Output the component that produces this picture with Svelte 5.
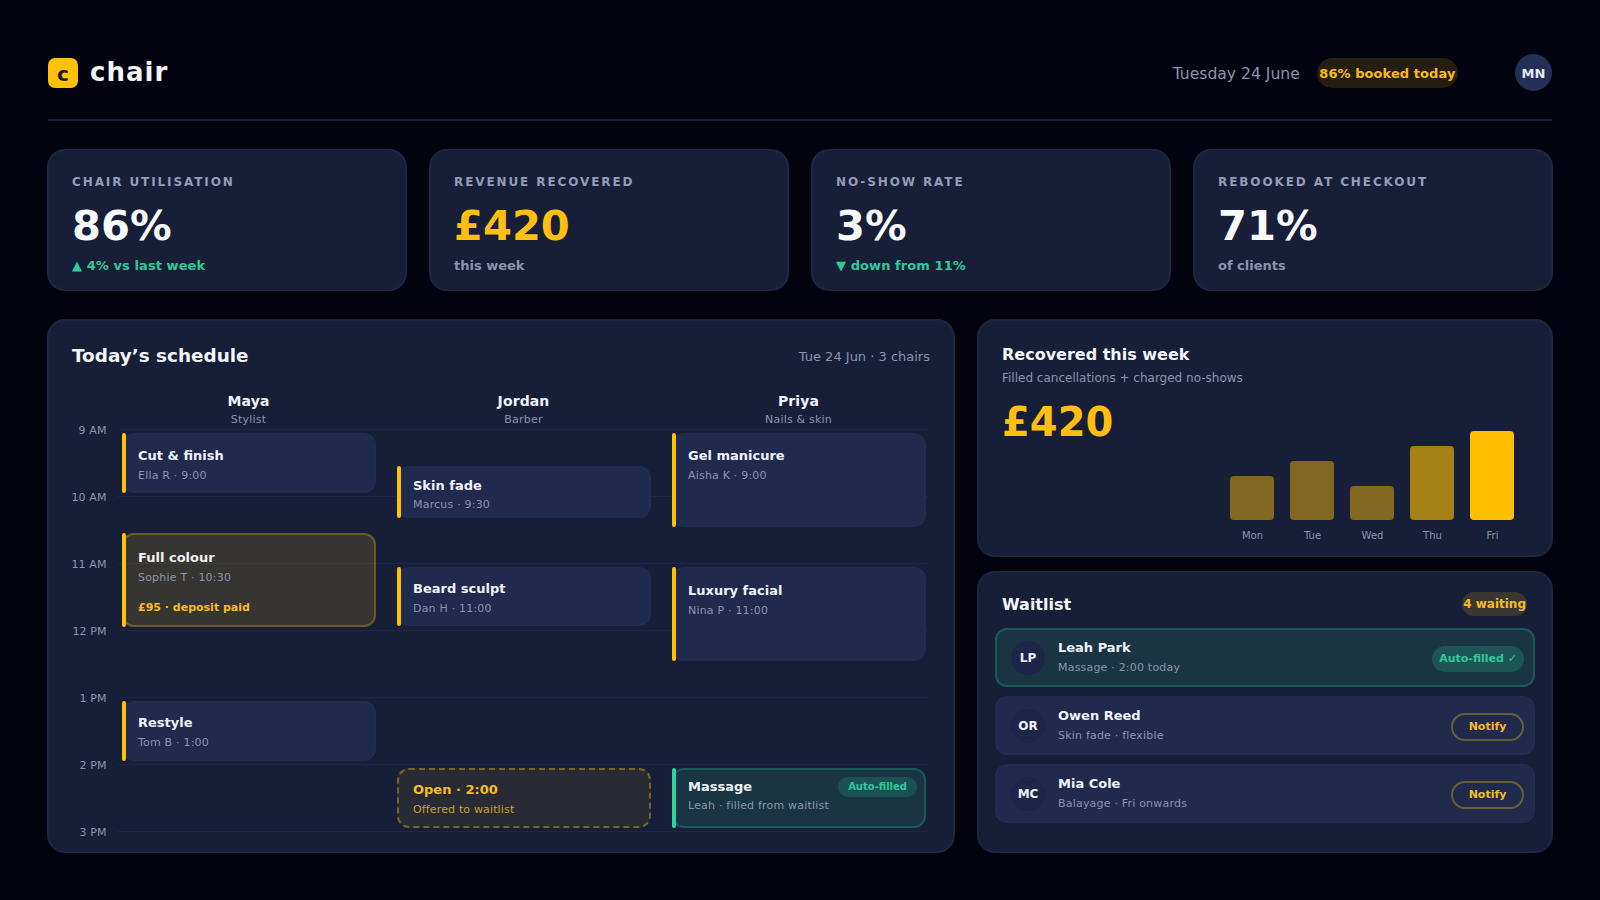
<script>
  const kpis = [
    { label: 'Chair utilisation', value: '86%', sub: '▲ 4% vs last week', subClass: 'up' },
    { label: 'Revenue recovered', value: '£420', sub: 'this week', valueClass: 'gold' },
    { label: 'No-show rate', value: '3%', sub: '▼ down from 11%', subClass: 'up' },
    { label: 'Rebooked at checkout', value: '71%', sub: 'of clients' }
  ];
  const chairs = [
    { name: 'Maya', role: 'Stylist' },
    { name: 'Jordan', role: 'Barber' },
    { name: 'Priya', role: 'Nails & skin' }
  ];
  const hours = ['9 AM', '10 AM', '11 AM', '12 PM', '1 PM', '2 PM', '3 PM'];
  const HOUR = 66.9;
  const COL = 275;
  const events = [
    { col: 0, start: 0, len: 60, pad: 13, title: 'Cut & finish', sub: 'Ella R · 9:00' },
    { col: 0, start: 1.5, len: 94, pad: 15, title: 'Full colour', sub: 'Sophie T · 10:30', note: '£95 · deposit paid', kind: 'deposit' },
    { col: 0, start: 4, len: 60, pad: 12, title: 'Restyle', sub: 'Tom B · 1:00' },
    { col: 1, start: 0.5, len: 52, pad: 10, tight: true, title: 'Skin fade', sub: 'Marcus · 9:30' },
    { col: 1, start: 2, len: 59, pad: 12, title: 'Beard sculpt', sub: 'Dan H · 11:00' },
    { col: 1, start: 5, len: 60, pad: 12, title: 'Open · 2:00', sub: 'Offered to waitlist', kind: 'open' },
    { col: 2, start: 0, len: 94, pad: 13, title: 'Gel manicure', sub: 'Aisha K · 9:00' },
    { col: 2, start: 2, len: 94, pad: 14, title: 'Luxury facial', sub: 'Nina P · 11:00' },
    { col: 2, start: 5, len: 60, pad: 9, tight: true, title: 'Massage', sub: 'Leah · filled from waitlist', kind: 'filled', tag: 'Auto-filled' }
  ];
  const bars = [
    { day: 'Mon', h: 44, o: 0.46 },
    { day: 'Tue', h: 59, o: 0.46 },
    { day: 'Wed', h: 34, o: 0.46 },
    { day: 'Thu', h: 74, o: 0.62 },
    { day: 'Fri', h: 89, o: 1 }
  ];
  const waitlist = [
    { in: 'LP', name: 'Leah Park', sub: 'Massage · 2:00 today', filled: true },
    { in: 'OR', name: 'Owen Reed', sub: 'Skin fade · flexible' },
    { in: 'MC', name: 'Mia Cole', sub: 'Balayage · Fri onwards' }
  ];
</script>

<div class="page">
  <header class="top">
    <div class="brand">
      <span class="logo">c</span>
      <span class="word">chair</span>
    </div>
    <div class="meta">
      <span class="date">Tuesday 24 June</span>
      <span class="booked">86% booked today</span>
      <span class="me">MN</span>
    </div>
  </header>

  <section class="kpis">
    {#each kpis as k}
      <div class="kpi">
        <div class="k-label">{k.label}</div>
        <div class="k-value {k.valueClass ?? ''}">{k.value}</div>
        <div class="k-sub {k.subClass ?? ''}">{k.sub}</div>
      </div>
    {/each}
  </section>

  <section class="main">
    <div class="panel schedule">
      <div class="s-head">
        <h2>Today’s schedule</h2>
        <span class="s-date">Tue 24 Jun · 3 chairs</span>
      </div>
      <div class="chairs">
        {#each chairs as c}
          <div class="chair">
            <div class="c-name">{c.name}</div>
            <div class="c-role">{c.role}</div>
          </div>
        {/each}
      </div>
      <div class="canvas">
        {#each hours as h}
          <div class="hour"><span class="h-label">{h}</span></div>
        {/each}
        {#each events as e}
          <div
            class="event {e.kind ?? ''}"
            class:tight={e.tight}
            style="left:{e.col * COL + 4}px;top:{e.start * HOUR + 4}px;height:{e.len}px;padding-top:{e.pad}px"
          >
            <i class="bar"></i>
            <div class="e-title">{e.title}</div>
            <div class="e-sub">{e.sub}</div>
            {#if e.note}<div class="e-note">{e.note}</div>{/if}
            {#if e.tag}<span class="e-tag">{e.tag}</span>{/if}
          </div>
        {/each}
      </div>
    </div>

    <div class="side">
      <div class="panel recovered">
        <h3>Recovered this week</h3>
        <p class="r-sub">Filled cancellations + charged no-shows</p>
        <div class="r-body">
          <div class="r-value">£420</div>
          <div class="chart">
            {#each bars as b}
              <div class="col">
                <div class="b" style="height:{b.h}px;opacity:{b.o}"></div>
                <span class="d">{b.day}</span>
              </div>
            {/each}
          </div>
        </div>
      </div>

      <div class="panel wait">
        <div class="w-head">
          <h3>Waitlist</h3>
          <span class="w-count">4 waiting</span>
        </div>
        <div class="rows">
          {#each waitlist as w}
            <div class="row" class:filled={w.filled}>
              <span class="init">{w.in}</span>
              <div class="who">
                <div class="w-name">{w.name}</div>
                <div class="w-sub">{w.sub}</div>
              </div>
              {#if w.filled}
                <span class="auto">Auto-filled ✓</span>
              {:else}
                <button class="notify">Notify</button>
              {/if}
            </div>
          {/each}
        </div>
      </div>
    </div>
  </section>
</div>

<style>
  :global(body) {
    margin: 0;
    background: #02030f;
    color: #f4f6fb;
    font-family: "DejaVu Sans", sans-serif;
  }
  h2, h3, p { margin: 0; }
  .page {
    width: 1600px;
    height: 900px;
    box-sizing: border-box;
    padding: 54px 48px 47px;
    display: flex;
    flex-direction: column;
  }
  .top {
    height: 65px;
    flex: none;
    display: flex;
    justify-content: space-between;
    align-items: flex-start;
    border-bottom: 2px solid #161b3a;
  }
  .brand { display: flex; align-items: flex-start; gap: 12px; padding-top: 4px; }
  .logo {
    width: 30px;
    height: 30px;
    box-sizing: border-box;
    padding-top: 2px;
    border-radius: 7px;
    background: #ffc107;
    color: #171717;
    font-weight: 700;
    font-size: 20px;
    line-height: 28px;
    display: flex;
    align-items: center;
    justify-content: center;
  }
  .word { font-size: 26px; font-weight: 700; letter-spacing: 1.05px; line-height: 30px; margin-top: -1px; color: #f4f6fb; }
  .meta { display: flex; align-items: center; }
  .date { font-size: 15.6px; line-height: 20px; padding-top: 2px; color: #8b93ad; margin-right: 17.5px; }
  .booked {
    height: 30px;
    line-height: 32px;
    padding: 0 2px;
    border-radius: 15px;
    background: rgba(255, 193, 7, 0.14);
    color: #f7bd1f;
    font-size: 13px;
    font-weight: 700;
    letter-spacing: 0.07px;
    margin-right: 57.5px;
  }
  .me {
    width: 37px;
    height: 37px;
    box-sizing: border-box;
    padding-top: 1px;
    border-radius: 50%;
    background: #242f55;
    color: #e6e9f4;
    font-size: 13px;
    font-weight: 700;
    display: flex;
    align-items: center;
    justify-content: center;
  }

  .kpis {
    flex: none;
    margin: 28px -1px 0;
    display: grid;
    grid-template-columns: repeat(4, 1fr);
    gap: 22px;
  }
  .kpi {
    height: 142px;
    box-sizing: border-box;
    padding: 24px 23px 0;
    background: #171f38;
    border: 2px solid #1d2541;
    border-radius: 18px;
  }
  .k-label { font-size: 12px; font-weight: 700; letter-spacing: 1.9px; text-transform: uppercase; color: #949cb7; line-height: 14px; }
  .k-value { margin-top: 14px; font-size: 41.6px; font-weight: 700; line-height: 46px; color: #f9fafc; }
  .k-value.gold { color: #ffbf0f; }
  .k-sub { margin-top: 9px; font-size: 13px; font-weight: 700; line-height: 15px; color: #8b93ad; }
  .k-sub.up { color: #2fc99a; letter-spacing: 0.08px; }

  .main {
    margin: 28px -1px 0;
    flex: 1;
    min-height: 0;
    display: grid;
    grid-template-columns: 908px 576px;
    grid-template-rows: minmax(0, 1fr);
    gap: 22px;
  }
  .panel {
    background: #171f38;
    border: 2px solid #1d2541;
    border-radius: 18px;
    box-sizing: border-box;
  }
  .schedule { padding: 0 23px; }
  .s-head { display: flex; justify-content: space-between; align-items: center; height: 22px; margin-top: 23px; }
  h2 { font-size: 18.4px; font-weight: 700; color: #f4f6fb; }
  .s-date { font-size: 13px; color: #8b93ad; padding-top: 3px; }
  .chairs { display: grid; grid-template-columns: repeat(3, 254px); column-gap: 21px; margin: 26px 0 0 49.5px; height: 37px; }
  .chair { text-align: center; }
  .c-name { font-size: 14px; font-weight: 700; letter-spacing: 0.1px; line-height: 18px; color: #f0f2f8; }
  .c-role { font-size: 11px; letter-spacing: 0.2px; line-height: 16px; margin-top: 2px; color: #8b93ad; }

  .canvas { position: relative; margin-left: 46px; width: 810px; }
  .hour { position: relative; height: 67px; box-sizing: border-box; border-top: 1px solid #1e2743; }
  .hour:last-of-type { height: 0; }
  .h-label {
    position: absolute;
    right: 100%;
    margin-right: 11.5px;
    top: -6px;
    font-size: 11px;
    letter-spacing: 0.1px;
    line-height: 14px;
    color: #8b93ad;
    white-space: nowrap;
  }
  .event {
    position: absolute;
    width: 254px;
    box-sizing: border-box;
    padding: 12px 12px 0 14px;
    background: #1f2a4d;
    border: 2px solid #212c4f;
    border-radius: 12px;
  }
  .bar {
    position: absolute;
    left: -2px;
    top: -2px;
    bottom: -2px;
    width: 4px;
    border-radius: 2px;
    background: #ffc107;
  }
  .e-title { font-size: 13px; font-weight: 700; line-height: 16px; color: #f1f3f9; }
  .e-sub { font-size: 11px; letter-spacing: 0.2px; line-height: 14px; margin-top: 5px; color: #8b93ad; }
  .tight .e-sub { margin-top: 4px; }
  .e-note { font-size: 11px; font-weight: 700; line-height: 14px; margin-top: 16px; color: #f7bd1f; }
  .event.deposit {
    background: rgba(255, 193, 7, 0.14);
    border-color: rgba(255, 193, 7, 0.26);
  }
  .event.open {
    background: rgba(255, 193, 7, 0.08);
    border: 2px dashed rgba(255, 193, 7, 0.38);
  }
  .event.open .bar { display: none; }
  .event.open .e-title { color: #f7bd1f; }
  .event.open .e-sub { color: #c9a22e; letter-spacing: 0.15px; }
  .event.filled {
    background: rgba(45, 212, 160, 0.12);
    border-color: rgba(45, 212, 160, 0.22);
  }
  .event.filled .bar { background: #2dd4a0; }
  .e-tag {
    position: absolute;
    top: 7px;
    right: 7px;
    height: 20px;
    line-height: 20px;
    padding: 0 10px;
    border-radius: 10px;
    font-size: 10px;
    font-weight: 700;
    color: #2fc99a;
    background: rgba(45, 212, 160, 0.18);
  }

  .side { display: flex; flex-direction: column; gap: 14px; min-height: 0; }
  .recovered { height: 238px; flex: none; padding: 24px 23px 0; }
  h3 { font-size: 16px; font-weight: 700; line-height: 20px; color: #f4f6fb; }
  .r-sub { font-size: 12px; line-height: 14px; margin-top: 6px; color: #8b93ad; }
  .r-body { display: flex; justify-content: space-between; align-items: flex-start; }
  .r-value { font-size: 40px; font-weight: 700; line-height: 46px; margin-top: 14px; color: #ffbf0f; }
  .chart { display: flex; gap: 16px; align-items: flex-end; height: 135px; padding-right: 14px; margin-top: 22px; }
  .col { width: 44px; display: flex; flex-direction: column; align-items: center; }
  .b { width: 44px; border-radius: 4px; background: #ffbf00; }
  .d { font-size: 10px; line-height: 12px; margin-top: 10px; padding-left: 1px; color: #8b93ad; }

  .wait { flex: 1; padding: 0 16px; }
  .w-head { display: flex; justify-content: space-between; align-items: center; height: 24px; margin: 19px 8px 0 7px; }
  .w-head h3 { margin-top: 2px; }
  .w-count {
    height: 24px;
    line-height: 24px;
    padding: 0 1px;
    border-radius: 12px;
    background: rgba(255, 193, 7, 0.15);
    color: #f7bd1f;
    font-size: 12px;
    font-weight: 700;
  }
  .rows { display: flex; flex-direction: column; gap: 9px; margin-top: 12px; }
  .row {
    height: 59px;
    box-sizing: border-box;
    display: flex;
    align-items: center;
    padding: 0 9px 0 14px;
    background: #1f2a4d;
    border: 2px solid #212c4f;
    border-radius: 12px;
  }
  .row.filled {
    background: rgba(45, 212, 160, 0.12);
    border-color: rgba(45, 212, 160, 0.22);
  }
  .init {
    width: 34px;
    height: 34px;
    flex: none;
    border-radius: 50%;
    background: #1d2649;
    color: #f1f3f9;
    font-size: 12px;
    font-weight: 700;
    display: flex;
    align-items: center;
    justify-content: center;
  }
  .who { flex: 1; margin-left: 13px; }
  .w-name { font-size: 13px; font-weight: 700; line-height: 16px; color: #f1f3f9; }
  .w-sub { font-size: 11px; letter-spacing: 0.2px; line-height: 14px; margin-top: 5px; color: #8b93ad; }
  .auto {
    height: 26px;
    line-height: 26px;
    margin-top: 2px;
    padding: 0 7px;
    border-radius: 13px;
    font-size: 11px;
    font-weight: 700;
    color: #2fc99a;
    background: rgba(45, 212, 160, 0.2);
  }
  .notify {
    width: 73px;
    height: 28px;
    margin-top: 2px;
    padding: 0;
    box-sizing: border-box;
    border-radius: 14px;
    border: 2px solid rgba(255, 193, 7, 0.34);
    background: transparent;
    color: #f7bd1f;
    font-family: inherit;
    font-size: 11px;
    font-weight: 700;
  }
</style>
